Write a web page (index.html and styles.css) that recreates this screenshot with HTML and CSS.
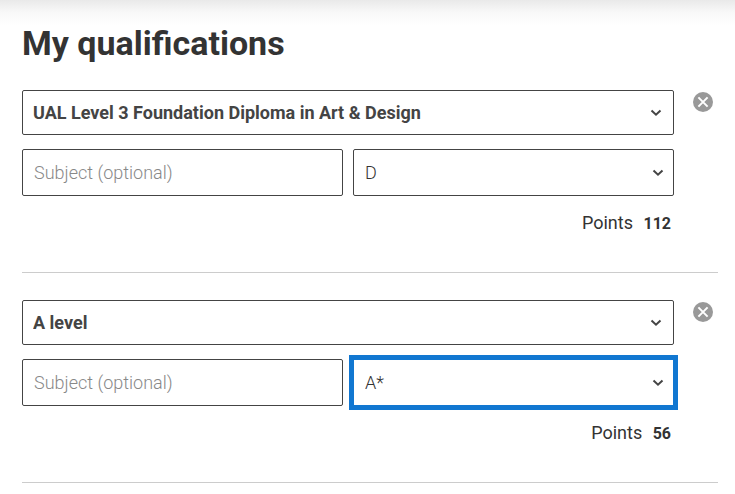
FILE: index.html
```html
<!DOCTYPE html>
<html lang="en">
<head>
    <meta charset="UTF-8">
    <meta name="viewport" content="width=device-width, initial-scale=1.0">
    <title>My qualifications</title>
    <link rel="stylesheet" href="styles.css">
</head>
<body>
    <main class="container">
        <h1 class="title">My qualifications</h1>

        <!-- Qualification 1 -->
        <section class="qualification">
            <div class="fields">
                <div class="select-box">
                    <select class="control type" aria-label="Qualification">
                        <option>UAL Level 3 Foundation Diploma in Art &amp; Design</option>
                    </select>
                    <svg class="arrow" viewBox="0 0 12 8" aria-hidden="true"><path d="M1.5 1.5 6 5.7l4.5-4.2"/></svg>
                </div>
                <div class="row">
                    <input class="control" type="text" placeholder="Subject (optional)" aria-label="Subject (optional)">
                    <div class="select-box">
                        <select class="control grade" aria-label="Grade">
                            <option>D</option>
                        </select>
                        <svg class="arrow" viewBox="0 0 12 8" aria-hidden="true"><path d="M1.5 1.5 6 5.7l4.5-4.2"/></svg>
                    </div>
                </div>
                <p class="points">Points <strong>112</strong></p>
            </div>
            <button class="remove" type="button" aria-label="Remove qualification">
                <svg viewBox="0 0 20 20" aria-hidden="true"><circle cx="10" cy="10" r="10"/><path d="M5.4 5.4l9.2 9.2M14.6 5.4l-9.2 9.2"/></svg>
            </button>
        </section>

        <!-- Qualification 2 -->
        <section class="qualification">
            <div class="fields">
                <div class="select-box">
                    <select class="control type" aria-label="Qualification">
                        <option>A level</option>
                    </select>
                    <svg class="arrow" viewBox="0 0 12 8" aria-hidden="true"><path d="M1.5 1.5 6 5.7l4.5-4.2"/></svg>
                </div>
                <div class="row">
                    <input class="control" type="text" placeholder="Subject (optional)" aria-label="Subject (optional)">
                    <div class="select-box">
                        <select class="control grade active" aria-label="Grade">
                            <option>A*</option>
                        </select>
                        <svg class="arrow" viewBox="0 0 12 8" aria-hidden="true"><path d="M1.5 1.5 6 5.7l4.5-4.2"/></svg>
                    </div>
                </div>
                <p class="points">Points <strong>56</strong></p>
            </div>
            <button class="remove" type="button" aria-label="Remove qualification">
                <svg viewBox="0 0 20 20" aria-hidden="true"><circle cx="10" cy="10" r="10"/><path d="M5.4 5.4l9.2 9.2M14.6 5.4l-9.2 9.2"/></svg>
            </button>
        </section>
    </main>
</body>
</html>
```
FILE: styles.css
```css
* {
    box-sizing: border-box;
}
body {
    margin: 0;
    background: #fff linear-gradient(#e9e9e9, #f8f8f8 12px, #fff) no-repeat 0 0 / 100% 26px;
    color: #333;
    font-family: Roboto, sans-serif;
    font-size: 18px;
}
.container {
    padding: 23px 17px 0 22px;
}
.title {
    margin: 0 0 27px;
    font-size: 34px;
    line-height: 40px;
    font-weight: 700;
}
.qualification {
    display: flex;
    align-items: flex-start;
    gap: 19px;
    padding-bottom: 36px;
    margin-bottom: 27px;
    border-bottom: 1px solid #ccc;
}
.fields {
    flex: 1;
}
.select-box {
    position: relative;
}
.control {
    display: block;
    width: 100%;
    height: 47px;
    margin: 0;
    padding: 0 11px;
    border: 1px solid #444;
    border-radius: 2px;
    background: #fff;
    color: #333;
    font-family: inherit;
    font-size: 18px;
    font-weight: 300;
    appearance: none;
}
.control::placeholder {
    color: #888;
    opacity: 1;
}
.type {
    height: 45px;
    padding: 0 10px;
    color: #444;
    font-weight: 700;
}
.control:focus,
.active {
    border-color: #1177d1;
    border-radius: 0;
    outline: none;
    box-shadow: 0 0 0 4px #1177d1;
}
.arrow {
    position: absolute;
    top: 50%;
    right: 10px;
    width: 12px;
    height: 8px;
    margin-top: -4px;
    fill: none;
    stroke: #444;
    stroke-width: 2;
    pointer-events: none;
}
.type + .arrow {
    right: 12px;
}
.row {
    display: grid;
    grid-template-columns: 1fr 1fr;
    gap: 10px;
    margin-top: 14px;
}
.points {
    margin: 15px 3px 0 0;
    line-height: 24px;
    text-align: right;
}
.points strong {
    margin-left: 6px;
    font-size: 16px;
}
.remove {
    width: 20px;
    height: 20px;
    margin: 2px 5px 0 0;
    padding: 0;
    border: none;
    background: none;
    cursor: pointer;
}
.remove svg {
    display: block;
    fill: #999;
    stroke: none;
}
.remove path {
    stroke: #fff;
    stroke-width: 2;
}
```
